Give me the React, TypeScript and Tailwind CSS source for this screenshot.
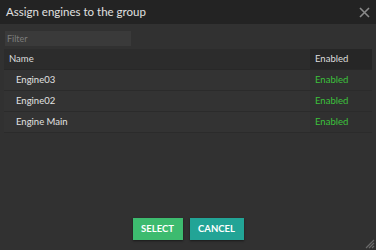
export default function App() {
  const rows = ['Engine03', 'Engine02', 'Engine Main'];

  return (
    <div className="w-[376px] h-[250px] flex flex-col bg-[#313131] text-[#dcdcdc] font-['Lato','Liberation_Sans',sans-serif] relative overflow-hidden">
      {/* title bar */}
      <div className="h-[24px] shrink-0 flex items-center justify-between bg-[#232323] pl-[6px] pr-[6px]">
        <span className="text-[11.5px] text-[#e0e0e0]">Assign engines to the group</span>
        <svg width="11" height="11" viewBox="0 0 11 11" className="text-[#8a8a8a]">
          <path d="M1 1L10 10M10 1L1 10" stroke="currentColor" strokeWidth="1.6" />
        </svg>
      </div>

      <div className="flex-1 flex flex-col px-[4px] pt-[7px]">
        <div className="ml-[1px] w-[126px] h-[15px] bg-[#3a3a3a] flex items-center px-[2px] text-[9px] text-[#7c7c7c]">
          Filter
        </div>

        <div className="mt-[3px] w-[368px] flex flex-col">
          <div className="flex h-[21px] bg-[#2c2c2c] border-b border-[#282828]">
            <div className="flex-1 flex items-center pl-[5px] text-[9.5px] text-[#dedede]">Name</div>
            <div className="w-[62px] flex items-center pl-[5px] bg-[#262626] text-[9.5px] text-[#dedede]">Enabled</div>
          </div>
          {rows.map((r) => (
            <div key={r} className="flex h-[21px] bg-[#333333] border-b border-[#2b2b2b]">
              <div className="flex-1 flex items-center pl-[12px] text-[9.5px] text-[#e2e2e2]">{r}</div>
              <div className="w-[62px] flex items-center pl-[5px] bg-[#303030] text-[9.5px] text-[#3cc23c]">Enabled</div>
            </div>
          ))}
        </div>

        <div className="mt-auto mb-[10px] flex justify-center gap-[7px]">
          <button className="w-[50px] h-[22px] bg-[#3dbb6f] text-white text-[9.5px] font-bold shadow-[0_1px_2px_rgba(0,0,0,0.5)]">
            SELECT
          </button>
          <button className="w-[54px] h-[22px] bg-[#22a496] text-white text-[9.5px] font-bold shadow-[0_1px_2px_rgba(0,0,0,0.5)]">
            CANCEL
          </button>
        </div>
      </div>

      <svg width="10" height="10" viewBox="0 0 10 10" className="absolute right-[1px] bottom-[1px] text-[#6a6a6a]">
        <path d="M9 1L1 9M9 4L4 9M9 7L7 9" stroke="currentColor" strokeWidth="1.2" />
      </svg>
    </div>
  );
}
